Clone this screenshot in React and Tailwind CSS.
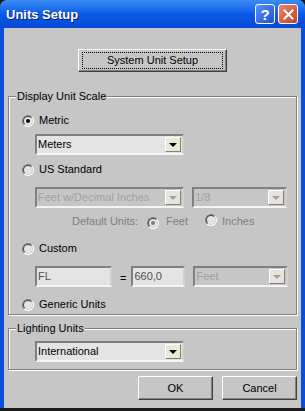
import React from "react";

const font = { fontFamily: '"Liberation Sans", Arial, sans-serif' };

function Radio({ checked, disabled }) {
  return (
    <span className="relative inline-flex h-[12px] w-[12px] shrink-0 items-center justify-center rounded-full border border-[#808080] border-r-white border-b-white bg-[#e4e4e4]">
      <span className="absolute inset-0 rounded-full border border-[#404040] border-r-[#d4d0c8] border-b-[#d4d0c8]" />
      {checked && (
        <span
          className={`relative h-[4px] w-[4px] rounded-full ${
            disabled ? "bg-[#808080]" : "bg-black"
          }`}
        />
      )}
    </span>
  );
}

function RadioRow({ label, checked, disabled, className = "" }) {
  return (
    <div className={`flex h-[13px] items-center ${className}`}>
      <Radio checked={checked} disabled={disabled} />
      <span className={`ml-[5px] ${disabled ? "text-[#808080]" : "text-black"}`}>{label}</span>
    </div>
  );
}

function Combo({ value, width, disabled }) {
  return (
    <div
      className={`flex h-[21px] items-center border-2 border-t-[#808080] border-l-[#808080] border-r-[#d4d0c8] border-b-[#f4f4f4] ${
        disabled ? "bg-[#c6c6c6]" : "bg-[#e4e4e4]"
      } ${width}`}
    >
      <span className={`flex-1 truncate pl-[1px] ${disabled ? "text-[#a0a0a0]" : "text-black"}`}>
        {value}
      </span>
      <span
        className={`mr-[1px] flex h-[15px] w-[16px] items-center justify-center border border-t-white border-l-white border-r-[#808080] border-b-[#808080] ${
          disabled ? "bg-[#e6e4dc]" : "bg-[#ece9d8]"
        }`}
      >
        <span
          className={`h-0 w-0 border-x-[4px] border-t-[4px] border-x-transparent ${
            disabled ? "border-t-[#a0a0a0]" : "border-t-black"
          }`}
        />
      </span>
    </div>
  );
}

function Field({ value, width, className = "" }) {
  return (
    <div
      className={`flex h-[21px] items-center border-2 border-t-[#808080] border-l-[#808080] border-r-[#d4d0c8] border-b-[#f4f4f4] bg-[#e4e4e4] pl-[1px] text-[#505050] ${width} ${className}`}
    >
      {value}
    </div>
  );
}

function Group({ label, className, children }) {
  return (
    <div
      className={`relative border border-[#808080] shadow-[inset_1px_1px_0_#fff,1px_1px_0_#fff] ${className}`}
    >
      <span className="absolute -top-[8px] left-[7px] bg-[#c6c6c6] px-[1px] leading-[14px]">
        {label}
      </span>
      {children}
    </div>
  );
}

function Button({ children, className = "", focused }) {
  return (
    <div
      className={`flex items-center justify-center border border-t-white border-l-white border-r-[#404040] border-b-[#404040] shadow-[inset_-1px_-1px_0_#808080] bg-[#c6c6c6] ${className}`}
    >
      {focused ? (
        <span className="flex h-[17px] w-[141px] items-center justify-center border border-dotted border-black">
          {children}
        </span>
      ) : (
        children
      )}
    </div>
  );
}

export default function App() {
  return (
    <div className="h-[411px] w-[305px] bg-[#1a1a1a] text-[11px] leading-[13px] text-black" style={font}>
      <div className="flex h-[408px] flex-col rounded-t-[7px] bg-[#0a4fdc]">
        <div className="flex h-[28px] shrink-0 items-center rounded-t-[7px] bg-gradient-to-b from-[#3d8cf7] via-[#0a5ae6] to-[#0649d6] px-[6px]">
          <span className="flex-1 text-[13px] font-bold text-white [text-shadow:1px_1px_0_#0a1e6e]">
            Units Setup
          </span>
          <span className="flex h-[20px] w-[20px] items-center justify-center rounded-[3px] border border-white bg-gradient-to-br from-[#5a8ef5] to-[#1c54db] text-[15px] font-bold text-white">
            ?
          </span>
          <span className="ml-[3px] mr-[1px] flex h-[20px] w-[20px] items-center justify-center rounded-[3px] border border-white bg-gradient-to-br from-[#e8886a] to-[#c7401a]">
            <svg width="11" height="11" viewBox="0 0 11 11">
              <path d="M1.5 1.5 L9.5 9.5 M9.5 1.5 L1.5 9.5" stroke="white" strokeWidth="2" strokeLinecap="square" />
            </svg>
          </span>
        </div>

        <div className="mx-[4px] flex flex-1 flex-col bg-[#c6c6c6] px-[4px] pb-[5px] pt-[21px]">
          <Button focused className="ml-[70px] h-[23px] w-[149px]">
            System Unit Setup
          </Button>

          <Group label="Display Unit Scale" className="mt-[24px] h-[219px] w-[289px]">
            <div className="flex flex-col pl-[13px] pt-[17px]">
              <RadioRow label="Metric" checked />
              <div className="ml-[13px] mt-[7px]">
                <Combo value="Meters" width="w-[149px]" />
              </div>
              <RadioRow label="US Standard" className="mt-[8px]" />
              <div className="ml-[13px] mt-[11px] flex gap-[8px]">
                <Combo value="Feet w/Decimal Inches" width="w-[149px]" disabled />
                <Combo value="1/8" width="w-[95px]" disabled />
              </div>
              <div className="ml-[50px] mt-[7px] flex h-[13px] items-center text-[#808080]">
                <span>Default Units:</span>
                <span className="ml-[9px]">
                  <Radio checked disabled />
                </span>
                <span className="ml-[7px]">Feet</span>
                <span className="ml-[17px]">
                  <Radio disabled />
                </span>
                <span className="ml-[5px]">Inches</span>
              </div>
              <RadioRow label="Custom" className="mt-[14px]" />
              <div className="ml-[13px] mt-[11px] flex items-center">
                <Field value="FL" width="w-[77px]" />
                <span className="ml-[8px] mr-[5px] mt-[3px]">=</span>
                <Field value="660,0" width="w-[54px]" />
                <div className="ml-[8px]">
                  <Combo value="Feet" width="w-[95px]" disabled />
                </div>
              </div>
              <RadioRow label="Generic Units" className="mt-[11px]" />
            </div>
          </Group>

          <Group label="Lighting Units" className="mt-[13px] h-[42px] w-[289px]">
            <div className="ml-[26px] mt-[12px]">
              <Combo value="International" width="w-[149px]" />
            </div>
          </Group>

          <div className="mt-[6px] flex justify-end gap-[9px]">
            <Button className="h-[24px] w-[75px]">OK</Button>
            <Button className="h-[24px] w-[75px]">Cancel</Button>
          </div>
        </div>
      </div>
    </div>
  );
}
